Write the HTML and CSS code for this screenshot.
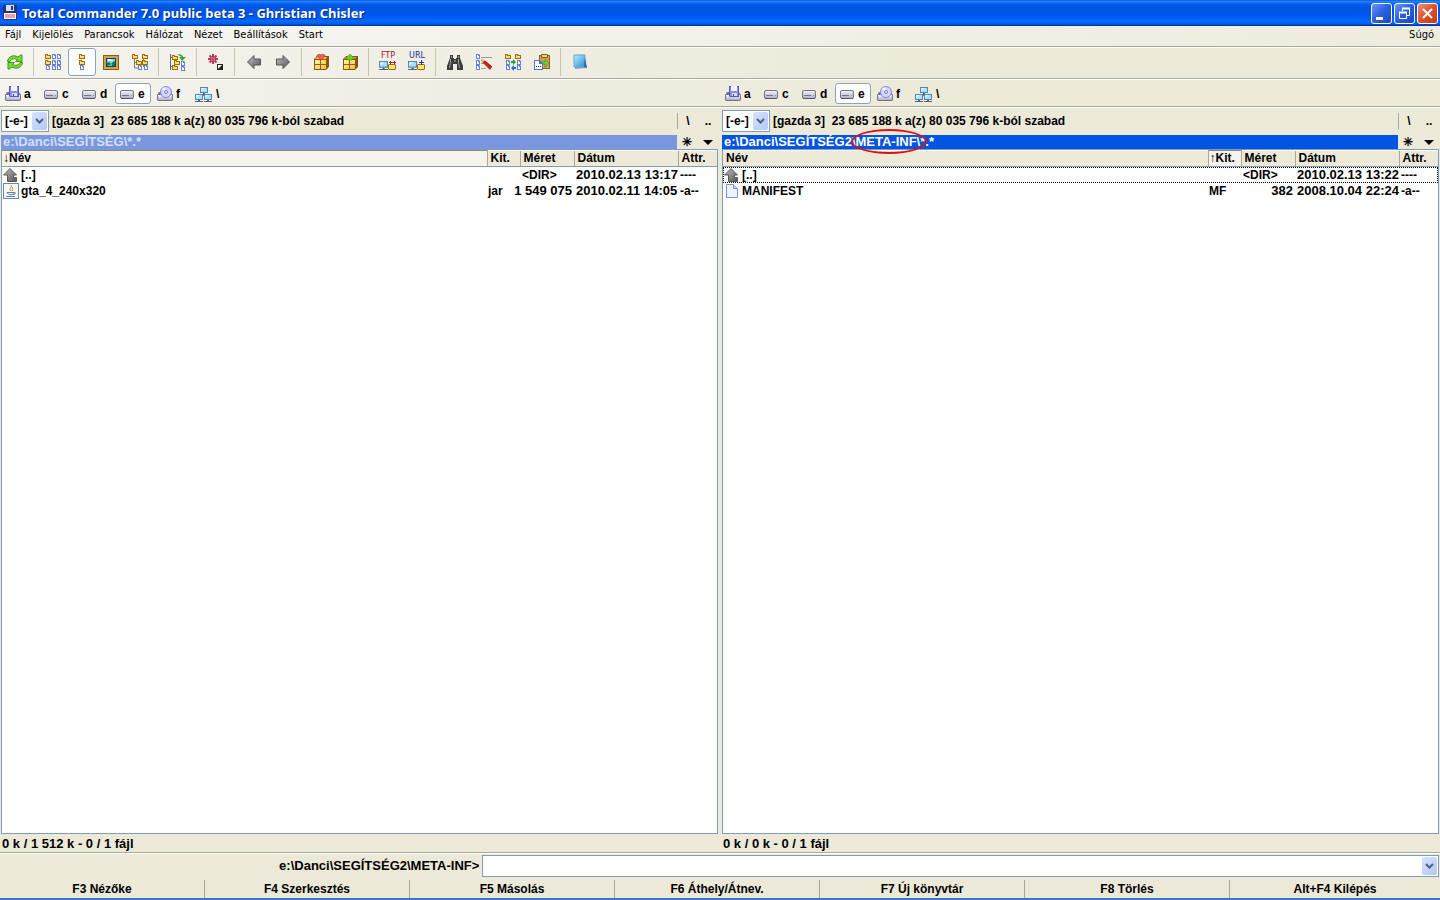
FILE: index.html
```html
<!DOCTYPE html>
<html lang="hu">
<head>
    <meta charset="UTF-8">
    <meta name="viewport" content="width=device-width, initial-scale=1.0">
    <title>Total Commander 7.0 public beta 3 - Ghristian Chisler</title>
    <link rel="stylesheet" href="styles.css">
</head>
<body>
    <!-- icon set -->
    <svg class="defs" aria-hidden="true">
        <defs>
            <linearGradient id="gGrey" x1="0" y1="0" x2="0" y2="1">
                <stop offset="0" stop-color="#f4f4fa"/><stop offset="1" stop-color="#b0b0c2"/>
            </linearGradient>
            <linearGradient id="gArrow" x1="0" y1="0" x2="1" y2="1">
                <stop offset="0" stop-color="#c0c0c0"/><stop offset="1" stop-color="#555"/>
            </linearGradient>
            <linearGradient id="gGold" x1="0" y1="0" x2="1" y2="1">
                <stop offset="0" stop-color="#fff6a8"/><stop offset="1" stop-color="#f0bc3c"/>
            </linearGradient>
            <linearGradient id="gBook" x1="0" y1="0" x2="1" y2="1">
                <stop offset="0" stop-color="#b8ecfc"/><stop offset="1" stop-color="#2b8fd8"/>
            </linearGradient>
        </defs>
        <symbol id="fold" viewBox="0 0 6 5">
            <path d="M0 0h3v1h3v4H0z" fill="#a06c10"/><path d="M1 1h1v1h3v2H1z" fill="#ffe070"/>
        </symbol>
        <symbol id="file" viewBox="0 0 4 5">
            <path d="M0 0h3l1 1v4H0z" fill="#6580dc"/><path d="M1 1h1v1h1v2H1z" fill="#fff"/>
        </symbol>
        <symbol id="pc" viewBox="0 0 8 8">
            <path d="M0 0h8v6H0z" fill="#5b83ac"/><path d="M1 1h6v4H1z" fill="#a4e4fa"/><path d="M1 1h4L1 4z" fill="#d8f8ff"/><path d="M0 7h8v1H0zM3 6h2v1H3z" fill="#56657c"/>
        </symbol>
        <symbol id="refresh" viewBox="0 0 18 18">
            <path d="M1.500 8.500C2 4 7 1 12 4l2.500-2H16v6.500H9.500l2-2C8 5 5 6 4 8.500z" fill="#7cd83a" stroke="#3d9a14"/>
            <path d="M16.500 9.500C16 14 11 17 6 14l-2.500 2H2V9.500h6.500l-2 2C10 13 13 12 14 9.500z" fill="#7cd83a" stroke="#3d9a14"/>
        </symbol>
        <symbol id="brief" viewBox="0 0 18 18">
            <use href="#fold" x="1" y="1" width="6" height="5"/><use href="#fold" x="1" y="7" width="6" height="5"/><use href="#file" x="2" y="12" width="4" height="5"/>
            <use href="#file" x="8" y="1" width="4" height="5"/><use href="#file" x="8" y="7" width="4" height="5"/><use href="#file" x="8" y="12" width="4" height="5"/>
            <use href="#file" x="13" y="1" width="4" height="5"/><use href="#file" x="13" y="7" width="4" height="5"/><use href="#file" x="13" y="12" width="4" height="5"/>
        </symbol>
        <symbol id="full" viewBox="0 0 18 18">
            <use href="#fold" x="6" y="1" width="6" height="5"/><use href="#fold" x="6" y="7" width="6" height="5"/><use href="#file" x="7" y="12" width="4" height="5"/>
        </symbol>
        <symbol id="thumbs" viewBox="0 0 18 18">
            <path d="M1 2h16v15H1z" fill="#85601c"/><path d="M2 3h14v13H2z" fill="#d5a24a"/><path d="M4 5h10v9H4z" fill="#163d66"/>
            <path d="M5 6h8v7H5z" fill="#70d0ff"/><path d="M6 6h3v1h2v1H6z" fill="#fff"/><path d="M5 10l2-1 2 2 3-3 1 1v4H5z" fill="#168038"/><path d="M5 13l5-2v2z" fill="#60c8d8"/>
        </symbol>
        <symbol id="tree" viewBox="0 0 18 18">
            <path d="M3.500 5v10H7M3 9.500h3M12.500 5v9" fill="none" stroke="#777"/>
            <use href="#fold" x="1" y="1" width="6" height="5"/><use href="#fold" x="11" y="1" width="6" height="5"/><use href="#fold" x="5" y="7" width="6" height="5"/><use href="#fold" x="11" y="7" width="6" height="5"/>
            <use href="#file" x="7" y="12" width="4" height="5"/><use href="#file" x="13" y="12" width="4" height="5"/>
        </symbol>
        <symbol id="branch" viewBox="0 0 18 18">
            <path d="M1 1h1v16H1zM2 4h2v1H2zM2 13h3v1H2z" fill="#666"/>
            <use href="#fold" x="3" y="2" width="6" height="5"/><use href="#fold" x="5" y="7" width="6" height="5"/><use href="#fold" x="3" y="12" width="6" height="5"/>
            <path d="M8 2c3-2 6 0 6 2h3l-4 4-3-4h2c0-1-2-2-4-2z" fill="#38a830"/>
            <use href="#file" x="12" y="8" width="4" height="5"/><use href="#file" x="12" y="13" width="4" height="5"/>
        </symbol>
        <symbol id="invert" viewBox="0 0 18 18">
            <path d="M6 1v10M1 6h10M2.500 2.500l7 7M9.500 2.500l-7 7" stroke="#b03a58" stroke-width="2"/><path d="M4 4h4v4H4z" fill="#d05a78"/>
            <path d="M10 11h6v6h-6z" fill="#222"/><path d="M11 12h4l-4 4z" fill="#fff"/>
        </symbol>
        <symbol id="left" viewBox="0 0 18 18">
            <path d="M2.500 9L9 2.500V6h6.500v6H9v3.500z" fill="url(#gArrow)" stroke="#555"/>
        </symbol>
        <symbol id="right" viewBox="0 0 18 18">
            <path d="M15.500 9L9 2.500V6H2.500v6H9v3.500z" fill="url(#gArrow)" stroke="#555"/>
        </symbol>
        <symbol id="box" viewBox="0 0 18 18">
            <path d="M2 6l3-3h12v11l-3 3H2z" fill="#8a5608"/><path d="M3 6l2-2h10l-1 2z" fill="#e8b840"/><path d="M3 7h11v9H3z" fill="url(#gGold)"/><path d="M8 7h1v9H8zM3 11h11v1H3z" fill="#94600c"/>
        </symbol>
        <symbol id="pack" viewBox="0 0 18 18">
            <use href="#box" width="18" height="18"/><path d="M5 2l3-1 1 1 1-1 3 1v1L9 7 5 3z" fill="#ee5a5a" stroke="#b83a3a" stroke-width=".5"/>
        </symbol>
        <symbol id="unpack" viewBox="0 0 18 18">
            <use href="#box" width="18" height="18"/><path d="M9 1l5 5h-3v1H7V6H4z" fill="#6bcf24" stroke="#328414" stroke-width=".5"/>
        </symbol>
        <symbol id="net" viewBox="0 0 18 18">
            <use href="#pc" x="0" y="8" width="9" height="9"/><path d="M10 11h6l1 1v4l-1 1h-6l-1-1v-4z" fill="#a86a10"/><path d="M10 12h6v4h-6z" fill="#ffe478"/>
        </symbol>
        <symbol id="ftp" viewBox="0 0 18 18">
            <use href="#net" width="18" height="18"/><path d="M10 9.500h7M11.500 8v3M15.500 8v3" stroke="#a82434"/>
        </symbol>
        <symbol id="url" viewBox="0 0 18 18">
            <use href="#net" width="18" height="18"/><path d="M11 9.500h5M13.500 7v5" stroke="#1838a8"/>
        </symbol>
        <symbol id="find" viewBox="0 0 18 18">
            <path d="M4 2h3v3h1v1h2V5h1V2h3v3l3 8v4h-6v-6H7v6H1v-4l3-8z" fill="#3c3c3c"/><path d="M4.500 6v4l-1 5M12.500 6v4l1 5M5.500 3v2M12.500 3v2" stroke="#999" fill="none"/><path d="M8 7h2v2H8z" fill="#777"/>
        </symbol>
        <symbol id="rename" viewBox="0 0 18 18">
            <use href="#file" x="1" y="1" width="4" height="5"/><use href="#file" x="1" y="7" width="4" height="5"/><use href="#file" x="1" y="12" width="4" height="5"/>
            <path d="M6 4.500h11M6 10.500h3M6 15.500h5" stroke="#999"/><path d="M6 6l3 1 8 7-2 3-8-8z" fill="#d02418"/><path d="M6 6l4 1-3 3z" fill="#eec070"/><path d="M10 8l7 6" stroke="#741008"/>
        </symbol>
        <symbol id="sync" viewBox="0 0 18 18">
            <use href="#fold" x="1" y="1" width="6" height="5"/><use href="#fold" x="11" y="1" width="6" height="5"/>
            <use href="#file" x="2" y="7" width="4" height="5"/><use href="#file" x="2" y="12" width="4" height="5"/><use href="#file" x="13" y="7" width="4" height="5"/><use href="#file" x="13" y="12" width="4" height="5"/>
            <path d="M7 8h2V6l3 3-3 3v-2H7z" fill="#30a028"/><path d="M12 14h-2v-2l-3 3 3 3v-2h2z" fill="#2870c0"/>
        </symbol>
        <symbol id="paste" viewBox="0 0 18 18">
            <path d="M6 2h11v14H6z" fill="#90641c"/><path d="M7 3h9v12H7z" fill="#c8a458"/><path d="M8.500 1.500h6v3h-6z" fill="#f4d460" stroke="#826020"/>
            <path d="M1 7h6l3 3v7H1z" fill="#5470c8"/><path d="M2 8h4v3h3v5H2z" fill="#fff"/><path d="M3 13h1v1H3zM5 13h1v1H5zM7 13h1v1H7z" fill="#335"/><path d="M9 9h3V6l4 4-4 4v-3H9z" fill="#76ce2c" stroke="#32801a" stroke-width=".5"/>
        </symbol>
        <symbol id="notes" viewBox="0 0 18 18">
            <path d="M4 3l9-1 3 13-12 1z" fill="#98a4ac"/><path d="M3 2h11l-1 12H3z" fill="url(#gBook)" stroke="#5ba8d0"/><path d="M14 4l2 11-3-1z" fill="#1b6cb0"/>
        </symbol>
        <symbol id="disk" viewBox="0 0 16 16">
            <rect x="1.500" y="4.500" width="13" height="8" rx="1.500" fill="url(#gGrey)" stroke="#74748e"/><path d="M3 9h7v1H3z" fill="#74748c"/><path d="M2 12h12v1H2z" fill="#555570"/><path d="M12 9h1v1h-1z" fill="#4b4"/>
        </symbol>
        <symbol id="floppy" viewBox="0 0 16 16">
            <path d="M2 6h12l2 3v5l-1 1H1l-1-1V9z" fill="#74748e"/><path d="M1 9h14v5H1z" fill="url(#gGrey)"/>
            <path d="M4 0h10v11H5l-1-1z" fill="#5858c4"/><path d="M5 1h8v9H5z" fill="#8a8af0"/><path d="M6 0h6v5H6z" fill="#f4f4ff"/><path d="M7 7h5v3H7z" fill="#dcdcf4"/><path d="M8 8h1v2H8z" fill="#44a"/>
        </symbol>
        <symbol id="cd" viewBox="0 0 16 16">
            <path d="M2 6h12l2 3v5l-1 1H1l-1-1V9z" fill="#74748e"/><path d="M1 9h14v5H1z" fill="url(#gGrey)"/>
            <circle cx="9" cy="6" r="5.500" fill="#d6d6ff" stroke="#8484d4"/><path d="M9 6l-4-3 3-2z" fill="#fff"/><circle cx="9" cy="6" r="1.500" fill="#fff" stroke="#7272cc"/>
        </symbol>
        <symbol id="network" viewBox="0 0 18 18">
            <path d="M9 8v3M4 10.500h10" stroke="#777"/><use href="#pc" x="5" y="2" width="8" height="8"/><use href="#pc" x="0" y="9" width="8" height="8"/><use href="#pc" x="9" y="9" width="8" height="8"/>
        </symbol>
        <symbol id="up" viewBox="0 0 16 16">
            <path d="M7 1.500L13.500 8h-3v2.500h3v4h-9V8h-4z" fill="url(#gArrow)" stroke="#5a5656"/>
        </symbol>
        <symbol id="jar" viewBox="0 0 16 16">
            <path d="M0 0h16v16H0z" fill="#6c88a4"/><path d="M1 1h14v14H1z" fill="#f5f7fa"/>
            <path d="M8 2c2 2-3 3 0 6M10 4c-2 1 1 2-1 4" fill="none" stroke="#ec7a1c"/><path d="M4 9.500h7c0 3-6 3-7 0M11 9.500c3 0 1 2-1 2M3 13.500h9" fill="none" stroke="#5580a8"/>
        </symbol>
        <symbol id="doc" viewBox="0 0 16 16">
            <path d="M2.500 1.500h7l4 4v9h-11z" fill="#eef3ff" stroke="#7c94cc"/><path d="M9.500 1.500v4h4" fill="#c8d6fa" stroke="#7c94cc"/>
        </symbol>
        <symbol id="chevron" viewBox="0 0 9 8">
            <path d="M1 2l3.500 3.500L8 2" fill="none" stroke="#4d6185" stroke-width="2"/>
        </symbol>
    </svg>

    <header class="titlebar">
        <svg class="app-icon" viewBox="0 0 14 16"><path d="M0 0h14v15H1l-1-1z" fill="#27347c"/><path d="M3 0h8v6H3z" fill="#d8e0f0"/><path d="M8 1h2v4H8z" fill="#27347c"/><path d="M1 8h12v6H1z" fill="#fff"/><path d="M2 10h10M2 12h10" stroke="#d04848"/></svg>
        <h1>Total Commander 7.0 public beta 3 - Ghristian Chisler</h1>
        <div class="window-buttons">
            <button type="button" aria-label="Kis méret"><svg viewBox="0 0 19 19"><path d="M4 13h7v3H4z" fill="#fff"/></svg></button>
            <button type="button" aria-label="Előző méret"><svg viewBox="0 0 19 19"><path d="M7.500 7V4.500h7v7H12M4.500 8.500h7v6h-7z" fill="none" stroke="#fff"/><path d="M7 4.500h8M4 8.500h8" stroke="#fff" stroke-width="2"/></svg></button>
            <button type="button" class="close" aria-label="Bezárás"><svg viewBox="0 0 19 19"><path d="M5 5l9 9M14 5l-9 9" stroke="#fff" stroke-width="2"/></svg></button>
        </div>
    </header>

    <nav class="menu">
        <a href="#">Fájl</a>
        <a href="#">Kijelölés</a>
        <a href="#">Parancsok</a>
        <a href="#">Hálózat</a>
        <a href="#">Nézet</a>
        <a href="#">Beállítások</a>
        <a href="#">Start</a>
        <a href="#" class="help">Súgó</a>
    </nav>

    <div class="toolbar">
        <button type="button" aria-label="Frissítés"><svg><use href="#refresh"/></svg></button>
        <span class="sep"></span>
        <button type="button" aria-label="Rövid nézet"><svg><use href="#brief"/></svg></button>
        <button type="button" class="pressed" aria-label="Teljes nézet"><svg><use href="#full"/></svg></button>
        <button type="button" aria-label="Miniatűrök"><svg><use href="#thumbs"/></svg></button>
        <button type="button" aria-label="Fa"><svg><use href="#tree"/></svg></button>
        <span class="sep"></span>
        <button type="button" aria-label="Összes fájl"><svg><use href="#branch"/></svg></button>
        <span class="sep"></span>
        <button type="button" aria-label="Kijelölés megfordítása"><svg><use href="#invert"/></svg></button>
        <span class="sep"></span>
        <button type="button" aria-label="Vissza"><svg><use href="#left"/></svg></button>
        <button type="button" aria-label="Előre"><svg><use href="#right"/></svg></button>
        <span class="sep"></span>
        <button type="button" aria-label="Tömörítés"><svg><use href="#pack"/></svg></button>
        <button type="button" aria-label="Kibontás"><svg><use href="#unpack"/></svg></button>
        <span class="sep"></span>
        <button type="button" class="net ftp"><span>FTP</span><svg><use href="#ftp"/></svg></button>
        <button type="button" class="net url"><span>URL</span><svg><use href="#url"/></svg></button>
        <span class="sep"></span>
        <button type="button" aria-label="Keresés"><svg><use href="#find"/></svg></button>
        <button type="button" aria-label="Csoportos átnevezés"><svg><use href="#rename"/></svg></button>
        <button type="button" aria-label="Szinkronizálás"><svg><use href="#sync"/></svg></button>
        <button type="button" aria-label="Beillesztés"><svg><use href="#paste"/></svg></button>
        <span class="sep"></span>
        <button type="button" aria-label="Jegyzettömb"><svg><use href="#notes"/></svg></button>
    </div>

    <div class="drives">
        <div class="drive-group">
            <button type="button"><svg><use href="#floppy"/></svg>a</button>
            <button type="button"><svg><use href="#disk"/></svg>c</button>
            <button type="button"><svg><use href="#disk"/></svg>d</button>
            <button type="button" class="pressed"><svg><use href="#disk"/></svg>e</button>
            <button type="button"><svg><use href="#cd"/></svg>f</button>
            <button type="button"><svg class="wide"><use href="#network"/></svg>\</button>
        </div>
        <div class="drive-group">
            <button type="button"><svg><use href="#floppy"/></svg>a</button>
            <button type="button"><svg><use href="#disk"/></svg>c</button>
            <button type="button"><svg><use href="#disk"/></svg>d</button>
            <button type="button" class="pressed"><svg><use href="#disk"/></svg>e</button>
            <button type="button"><svg><use href="#cd"/></svg>f</button>
            <button type="button"><svg class="wide"><use href="#network"/></svg>\</button>
        </div>
    </div>

    <main class="panels">
        <section class="panel">
            <div class="info">
                <div class="drive-select">
                    <select aria-label="Bal meghajtó"><option>[-e-]</option></select>
                    <span class="arrow"><svg><use href="#chevron"/></svg></span>
                </div>
                <span class="space">[gazda 3]&nbsp; 23 685 188 k a(z) 80 035 796 k-ból szabad</span>
                <div class="nav-buttons divided"><button type="button">\</button><button type="button">..</button></div>
            </div>
            <div class="path-row">
                <div class="path">e:\Danci\SEGÍTSÉG\*.*</div>
                <div class="nav-buttons"><button type="button">✳</button><button type="button" aria-label="Előzmények"><i class="triangle"></i></button></div>
            </div>
            <div class="list">
                <table>
                    <colgroup><col><col class="c-ext"><col class="c-size"><col class="c-date"><col class="c-attr"></colgroup>
                    <thead>
                        <tr><th class="sorted">↓Név</th><th>Kit.</th><th>Méret</th><th>Dátum</th><th>Attr.</th></tr>
                    </thead>
                    <tbody>
                        <tr><td><span class="name"><svg><use href="#up"/></svg>[..]</span></td><td></td><td class="dir">&lt;DIR&gt;</td><td class="date">2010.02.13 13:17</td><td>----</td></tr>
                        <tr><td><span class="name"><svg><use href="#jar"/></svg>gta_4_240x320</span></td><td>jar</td><td class="size"><span>1 549 075</span></td><td class="date">2010.02.11 14:05</td><td>-a--</td></tr>
                    </tbody>
                </table>
            </div>
            <div class="status">0 k / 1 512 k - 0 / 1 fájl</div>
        </section>

        <section class="panel active">
            <div class="info">
                <div class="drive-select">
                    <select aria-label="Jobb meghajtó"><option>[-e-]</option></select>
                    <span class="arrow"><svg><use href="#chevron"/></svg></span>
                </div>
                <span class="space">[gazda 3]&nbsp; 23 685 188 k a(z) 80 035 796 k-ból szabad</span>
                <div class="nav-buttons divided"><button type="button">\</button><button type="button">..</button></div>
            </div>
            <div class="path-row">
                <div class="path">e:\Danci\SEGÍTSÉG2<span class="circled">\META-INF\*</span>.*</div>
                <div class="nav-buttons"><button type="button">✳</button><button type="button" aria-label="Előzmények"><i class="triangle"></i></button></div>
            </div>
            <div class="list">
                <table>
                    <colgroup><col><col class="c-ext"><col class="c-size"><col class="c-date"><col class="c-attr"></colgroup>
                    <thead>
                        <tr><th>Név</th><th class="sorted">↑Kit.</th><th>Méret</th><th>Dátum</th><th>Attr.</th></tr>
                    </thead>
                    <tbody>
                        <tr class="focused"><td><span class="name"><svg><use href="#up"/></svg>[..]</span></td><td></td><td class="dir">&lt;DIR&gt;</td><td class="date">2010.02.13 13:22</td><td>----</td></tr>
                        <tr><td><span class="name"><svg><use href="#doc"/></svg>MANIFEST</span></td><td>MF</td><td class="size"><span>382</span></td><td class="date">2008.10.04 22:24</td><td>-a--</td></tr>
                    </tbody>
                </table>
            </div>
            <div class="status">0 k / 0 k - 0 / 1 fájl</div>
        </section>
    </main>

    <form class="command">
        <label for="cmd">e:\Danci\SEGÍTSÉG2\META-INF&gt;</label>
        <div class="combo">
            <input type="text" id="cmd">
            <button type="button" class="arrow" aria-label="Korábbi parancsok"><svg><use href="#chevron"/></svg></button>
        </div>
    </form>

    <footer class="keys">
        <button type="button">F3 Nézőke</button>
        <button type="button">F4 Szerkesztés</button>
        <button type="button">F5 Másolás</button>
        <button type="button">F6 Áthely/Átnev.</button>
        <button type="button">F7 Új könyvtár</button>
        <button type="button">F8 Törlés</button>
        <button type="button">Alt+F4 Kilépés</button>
    </footer>
</body>
</html>
```
FILE: styles.css
```css
* {
    box-sizing: border-box;
}
body {
    margin: 0;
    height: 100vh;
    display: flex;
    flex-direction: column;
    overflow: hidden;
    background-color: #ece9d8;
    border-bottom: 2px solid #3a76c8;
    color: #000;
    font: bold 12px/16px "Liberation Sans", Arial, sans-serif;
}
button {
    padding: 0;
    border: none;
    background: none;
    color: inherit;
    font: inherit;
}
svg {
    display: block;
    flex: none;
}
.defs {
    position: absolute;
    width: 0;
    height: 0;
}

/* title bar */
.titlebar {
    display: flex;
    align-items: center;
    flex: none;
    height: 26px;
    padding: 0 2px 0 3px;
    background: linear-gradient(#0958d6 0%, #2a85fa 6%, #0468f4 12%, #0057e5 22%, #0054e3 30%, #0055eb 56%, #005bf5 66%, #026afe 80%, #0062ef 90%, #0046b8 96%, #003092 100%);
}
.app-icon {
    width: 14px;
    height: 16px;
}
h1 {
    flex: 1;
    margin: 0 0 0 5px;
    color: #fff;
    font: bold 13px/18px "Noto Sans", "Open Sans", sans-serif;
    text-shadow: 1px 1px 1px #0a2a80;
}
.window-buttons {
    display: flex;
    gap: 2px;
}
.window-buttons button {
    width: 21px;
    height: 21px;
    border: 1px solid #fff;
    border-radius: 3px;
    background: linear-gradient(135deg, #6c94f0, #2a60de 50%, #1a48c0);
}
.window-buttons .close {
    background: linear-gradient(135deg, #f0907a, #e0502c 50%, #c03a14);
}
.window-buttons svg {
    width: 19px;
    height: 19px;
}

/* menu */
.menu {
    display: flex;
    gap: 11px;
    flex: none;
    height: 21px;
    padding: 0 6px 0 5px;
    border-bottom: 1px solid #aca899;
    background: linear-gradient(to right, #f6f5f1, #efecde);
    font: 11px/18px "DejaVu Sans Condensed", "DejaVu Sans", sans-serif;
}
.menu a {
    color: #000;
    text-decoration: none;
}
.menu .help {
    margin-left: auto;
}

/* toolbars */
.toolbar {
    display: flex;
    gap: 1px;
    flex: none;
    height: 32px;
    padding: 0 1px 2px;
    border-top: 1px solid #fff;
    border-bottom: 1px solid #aca899;
    background: linear-gradient(to right, #f4f3ed, #ece9d8 70%);
}
.toolbar button {
    display: flex;
    align-items: center;
    justify-content: center;
    width: 28px;
    border: 1px solid transparent;
    border-radius: 3px;
}
.toolbar svg {
    width: 18px;
    height: 18px;
}
.toolbar .pressed,
.drives .pressed {
    border-color: #8aa4c0;
    background-color: #fff;
}
.toolbar .sep {
    width: 8px;
    background: linear-gradient(#c8c4b0, #c8c4b0) 3px 0 / 1px 100% no-repeat;
}
.toolbar .net {
    position: relative;
}
.net span {
    position: absolute;
    top: 3px;
    left: 0;
    right: 0;
    font: 8px/8px "DejaVu Sans", sans-serif;
    text-align: center;
}
.ftp span {
    color: #a01828;
}
.url span {
    color: #1028a0;
}
.drives {
    display: grid;
    grid-template-columns: 1fr 1fr;
    flex: none;
    height: 28px;
    border-top: 1px solid #fff;
    border-bottom: 1px solid #aca899;
    background: linear-gradient(to right, #f4f3ed, #ece9d8 70%);
}
.drive-group {
    display: flex;
    gap: 2px;
    padding: 3px 1px 2px;
}
.drive-group button {
    display: flex;
    align-items: center;
    gap: 3px;
    width: 36px;
    padding-left: 3px;
    border: 1px solid transparent;
    border-radius: 3px;
}
.drive-group svg {
    width: 16px;
    height: 16px;
}
.drive-group .wide {
    width: 18px;
    height: 18px;
}

/* file panels */
.panels {
    display: grid;
    grid-template-columns: 1fr 1fr;
    gap: 4px;
    flex: 1;
    padding: 0 1px;
    border-top: 1px solid #fff;
}
.panel {
    display: flex;
    flex-direction: column;
    min-width: 0;
}
.info {
    display: flex;
    align-items: center;
    height: 26px;
}
.drive-select {
    position: relative;
    width: 48px;
    height: 22px;
    border: 1px solid #7f9db9;
    background-color: #fff;
}
.drive-select select {
    width: 100%;
    height: 20px;
    padding: 0 0 0 3px;
    border: none;
    background: none;
    color: inherit;
    font: inherit;
    appearance: none;
}
.arrow {
    display: flex;
    align-items: center;
    justify-content: center;
    width: 15px;
    border-radius: 2px;
    background: linear-gradient(135deg, #d6e2fe, #b4c8f6);
}
.arrow svg {
    width: 9px;
    height: 8px;
}
.drive-select .arrow {
    position: absolute;
    top: 1px;
    right: 1px;
    bottom: 1px;
    pointer-events: none;
}
.space {
    flex: 1;
    padding-left: 3px;
    white-space: nowrap;
}
.nav-buttons {
    display: flex;
    width: 41px;
}
.nav-buttons button {
    flex: 1;
}
.divided {
    border-left: 1px solid #aca899;
}
.triangle {
    display: inline-block;
    border: 5px solid transparent;
    border-top-color: #000;
    border-bottom: none;
    vertical-align: middle;
}
.path-row {
    display: flex;
    align-items: center;
    height: 15px;
}
.path {
    flex: 1;
    height: 14px;
    padding-left: 2px;
    background-color: #7a96df;
    color: #d0e0ff;
    font-size: 13px;
    line-height: 14px;
}
.active .path {
    background-color: #0054e3;
    color: #fff;
}
.circled {
    position: relative;
}
.circled::after {
    content: "";
    position: absolute;
    inset: -5px -2px -5px -1px;
    border: 2px solid #e01010;
    border-radius: 50%;
}
.list {
    flex: 1;
    border: 1px solid #7f9db9;
    background-color: #fff;
}
table {
    width: 100%;
    table-layout: fixed;
    border-collapse: collapse;
}
.c-ext {
    width: 33px;
}
.c-size {
    width: 54px;
}
.c-date {
    width: 104px;
}
.c-attr {
    width: 39px;
}
th {
    height: 16px;
    padding: 0 0 0 3px;
    border-right: 1px solid #aca899;
    border-bottom: 1px solid #7f9db9;
    background-color: #ece9d8;
    line-height: 15px;
    text-align: left;
    white-space: nowrap;
}
th:last-child {
    border-right: none;
}
th.sorted {
    padding-left: 1px;
    border-top: 1px solid #888;
    background-color: #f5f3ea;
}
td {
    height: 16px;
    padding: 0 0 0 1px;
    white-space: nowrap;
}
td:nth-child(5),
.dir,
.date {
    padding-left: 2px;
}
.date,
.size {
    font-size: 13px;
}
.size span {
    display: flex;
    justify-content: flex-end;
    padding-right: 2px;
}
.name {
    display: flex;
    gap: 2px;
}
.name svg {
    width: 16px;
    height: 16px;
}
.focused {
    outline: 1px dotted #000;
    outline-offset: -1px;
}
.status {
    height: 18px;
    padding-left: 1px;
    font-size: 13px;
    line-height: 20px;
}

/* command line */
.command {
    display: grid;
    grid-template-columns: 1fr 2fr;
    align-items: center;
    flex: none;
    margin: 0;
    padding: 2px 1px 1px;
    border-top: 1px solid #aca899;
    box-shadow: inset 0 1px #fff;
}
.command label {
    padding-right: 1px;
    font-size: 13px;
    text-align: right;
}
.combo {
    display: flex;
    height: 22px;
    margin-left: 2px;
    padding: 1px;
    border: 1px solid #7f9db9;
    background-color: #fff;
}
.combo input {
    flex: 1;
    padding: 0 3px;
    border: none;
    font: inherit;
}

/* function keys */
.keys {
    display: grid;
    grid-template-columns: repeat(6, 41fr) 42fr;
    flex: none;
    padding: 2px 0 0;
}
.keys button {
    height: 18px;
    border-right: 1px solid #aca899;
}
.keys button:last-child {
    border-right: none;
}
```
